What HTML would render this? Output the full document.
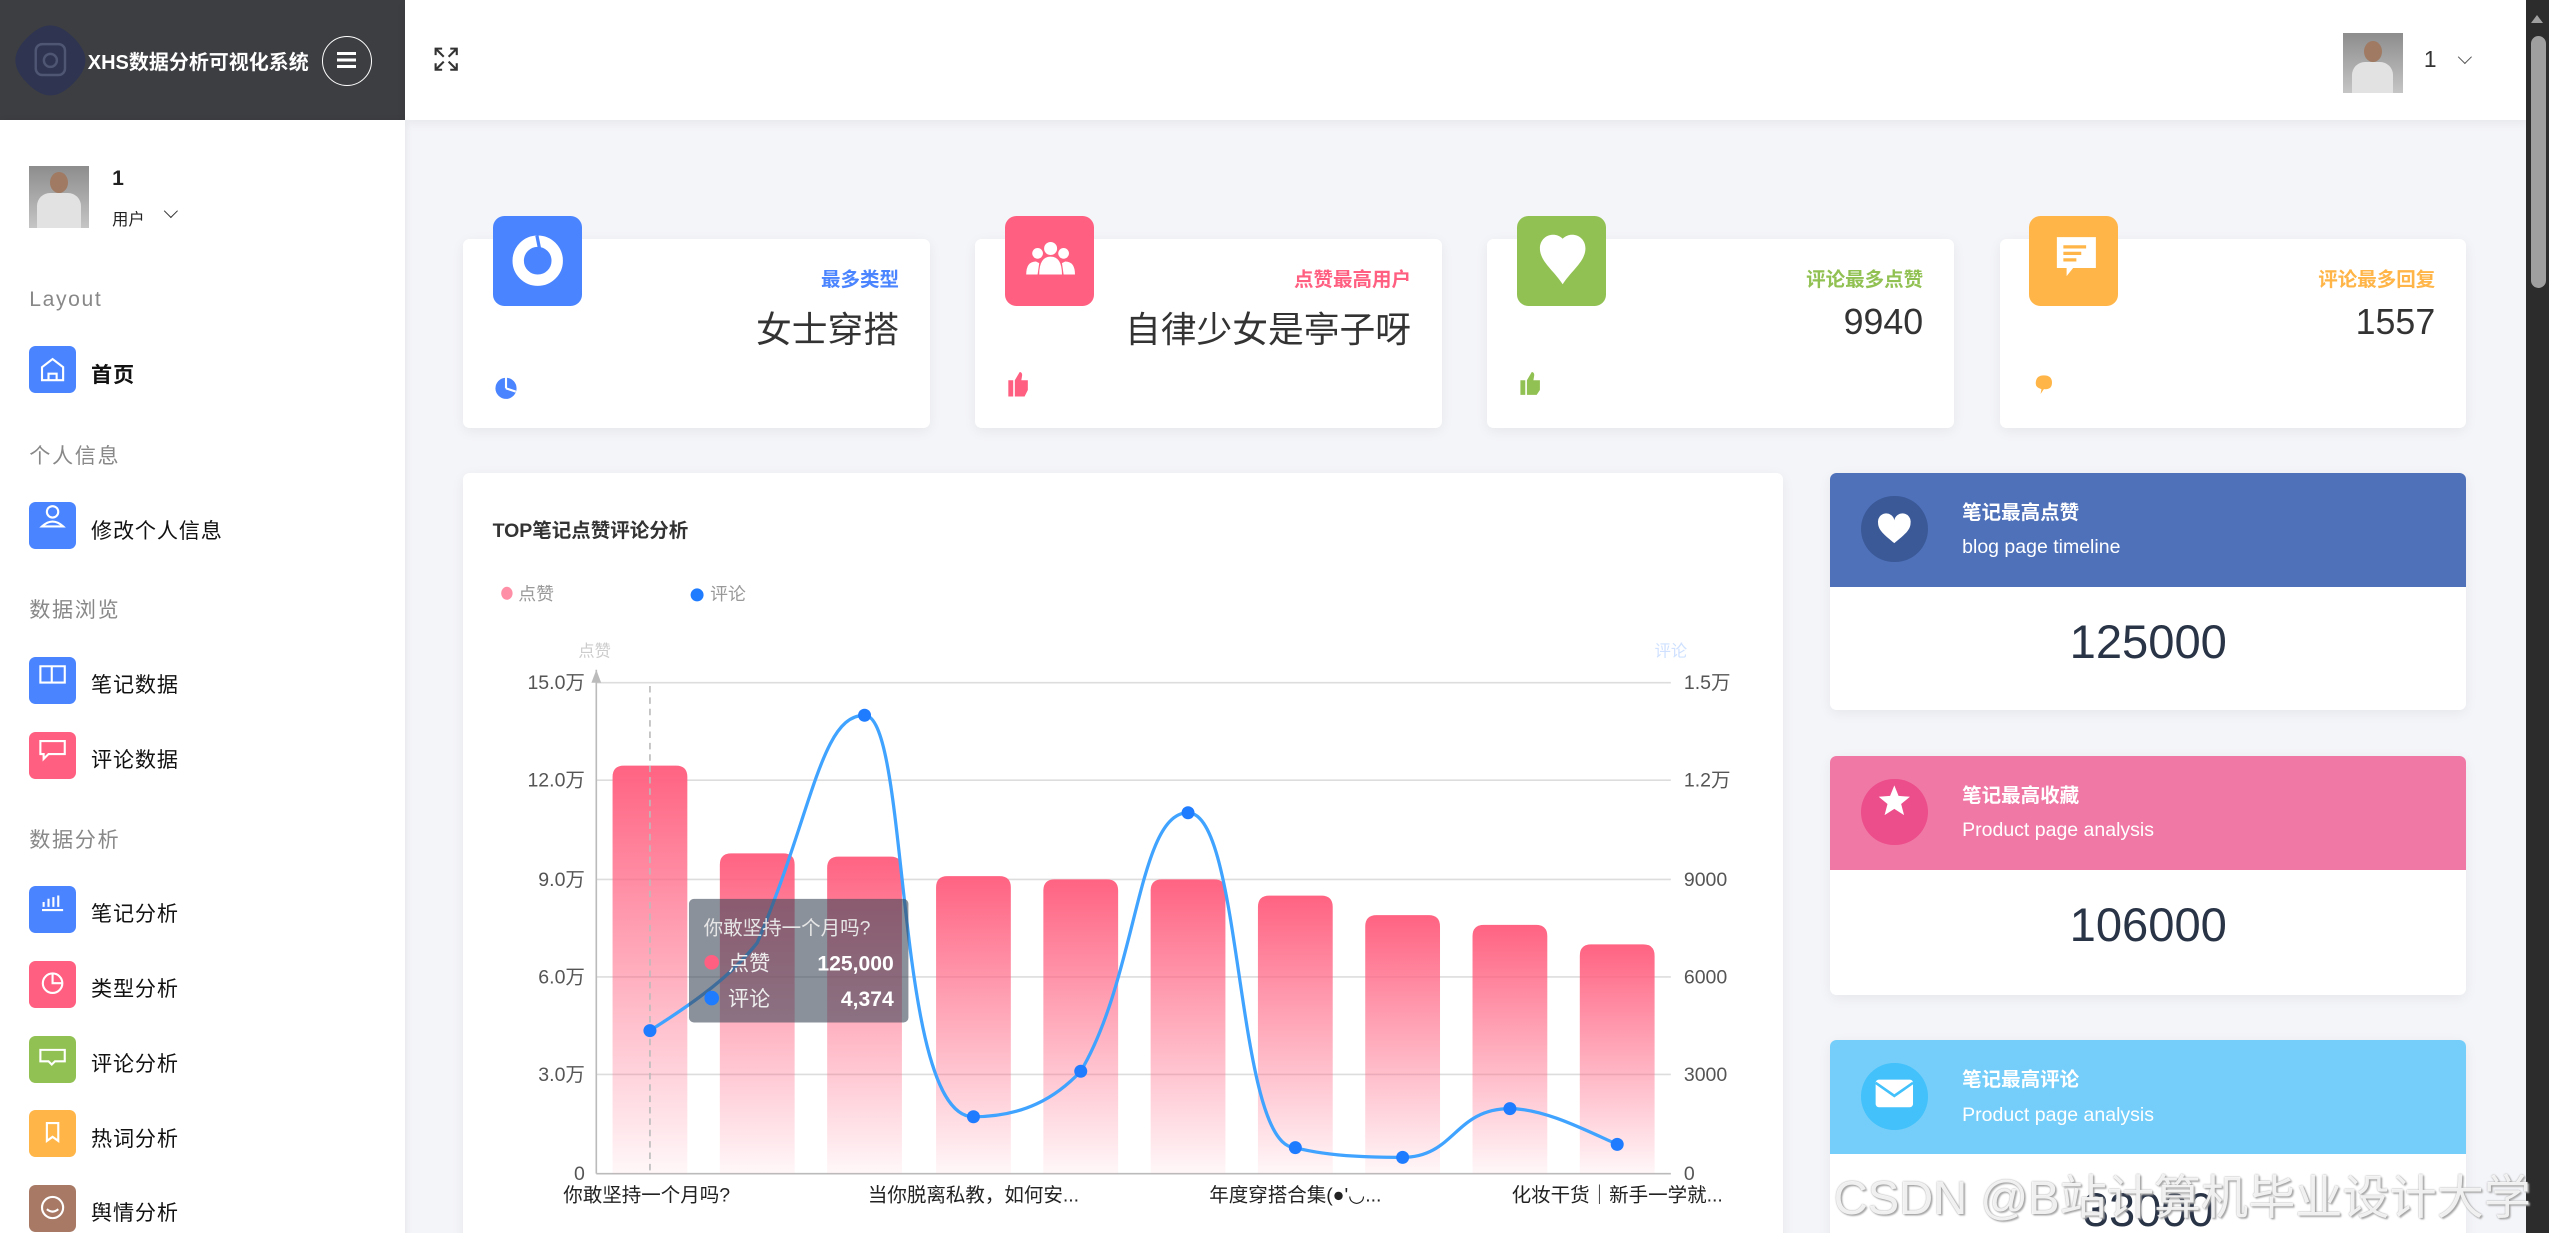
<!DOCTYPE html>
<html><head><meta charset="utf-8"><style>
*{margin:0;padding:0;box-sizing:border-box}
html,body{width:2549px;height:1233px;overflow:hidden;background:#f4f5f9}
#r{zoom:1.62564;width:1568px;height:758.5px;position:relative;overflow:hidden;font-family:"Liberation Sans","Noto Sans CJK SC",sans-serif;background:#f4f5f9;color:#222}
.a{position:absolute}
.side{left:0;top:74px;width:249px;height:700px;background:#fff;box-shadow:1px 0 4px rgba(0,0,0,.06)}
.sec{position:absolute;left:18px;font-size:13px;color:#888;letter-spacing:1px}
.it{position:absolute;left:18px;width:29px;height:29px;border-radius:4px}
.itx{position:absolute;left:56px;font-size:13px;color:#111;letter-spacing:.5px}
.card{background:#fff;border-radius:4px;box-shadow:0 2px 8px rgba(0,0,0,.06);width:287px;height:116px;top:147px}
.ic{width:55px;height:55px;border-radius:7px;top:133px}
.lab{font-size:12px;font-weight:bold;text-align:right;width:200px;top:162px}
.val{font-size:22px;color:#333;text-align:right;width:300px;top:186px}
.rp{left:1126px;width:391px;background:#fff;border-radius:4px;box-shadow:0 2px 8px rgba(0,0,0,.06);overflow:hidden}
.rh{height:70px;position:relative;color:#fff}
.rc{position:absolute;left:19px;top:14px;width:41px;height:41px;border-radius:50%}
.rt{position:absolute;left:81px;top:14px;font-size:12px;font-weight:bold}
.rs{position:absolute;left:81px;top:39px;font-size:12px}
.rv{text-align:center;font-size:29px;color:#2a3447;padding-top:17px}
</style></head><body><div id="r">
<div class="a" style="left:0;top:0;width:249px;height:74px;background:#3d3e42"></div>
<svg class="a" style="left:8px;top:14px" width="46" height="46" viewBox="0 0 46 46"><path d="M23 3 C37 3 43 9 43 23 C43 37 37 43 23 43 C9 43 3 37 3 23 C3 9 9 3 23 3Z" fill="#2f3550" transform="rotate(45 23 23)"/><rect x="14" y="13" width="18" height="19" rx="4" fill="none" stroke="#4e5674" stroke-width="1.5"/><circle cx="23" cy="23" r="4" fill="none" stroke="#4e5674" stroke-width="1.5"/></svg>
<div class="a" style="left:54px;top:28px;color:#fff;font-size:12.3px;font-weight:bold">XHS数据分析可视化系统</div>
<div class="a" style="left:198px;top:22px;width:31px;height:31px;border:1px solid #fff;border-radius:50%"></div>
<div class="a" style="left:207px;top:32px;width:12px;height:2px;background:#fff;box-shadow:0 4px 0 #fff,0 8px 0 #fff"></div>
<div class="a" style="left:249px;top:0;width:1306px;height:74px;background:#fff;box-shadow:0 2px 6px rgba(0,0,0,.06)"></div>
<svg class="a" style="left:267px;top:29px" width="15" height="15" viewBox="0 0 15 15" fill="none" stroke="#333" stroke-width="1.3"><path d="M1 5V1h4M1 1l5 5M14 5V1h-4M14 1L9 6M1 10v4h4M1 14l5-5M14 10v4h-4M14 14L9 9"/></svg>
<div class="a" style="left:1441px;top:20px;width:37px;height:37px;background:linear-gradient(#8d8d8d,#c5c5c5)"><div style="position:absolute;left:13px;top:5px;width:11px;height:13px;border-radius:50%;background:#a07a62"></div><div style="position:absolute;left:6px;top:18px;width:25px;height:19px;border-radius:8px 8px 0 0;background:#e2e2e2"></div></div>
<div class="a" style="left:1491px;top:28px;font-size:14px;color:#333">1</div>
<div class="a" style="left:1513px;top:32px;width:6px;height:6px;border-right:1px solid #555;border-bottom:1px solid #555;transform:rotate(45deg)"></div>
<div class="a" style="left:1554px;top:0;width:14px;height:759px;background:#2c2c2c"></div>
<div class="a" style="left:1557px;top:22px;width:9px;height:155px;border-radius:5px;background:#9f9f9f"></div>
<div class="a" style="left:1557px;top:9px;width:0;height:0;border-left:4px solid transparent;border-right:4px solid transparent;border-bottom:5px solid #9f9f9f"></div>
<div class="a side"></div>
<div class="a" style="left:18px;top:102px;width:37px;height:38px;background:linear-gradient(#8d8d8d,#c5c5c5)"><div style="position:absolute;left:13px;top:4px;width:11px;height:13px;border-radius:50%;background:#a07a62"></div><div style="position:absolute;left:5px;top:17px;width:27px;height:21px;border-radius:8px 8px 0 0;background:#e2e2e2"></div></div>
<div class="a" style="left:69px;top:103px;font-size:13px;font-weight:bold">1</div>
<div class="a" style="left:69px;top:127px;font-size:10px">用户</div>
<div class="a" style="left:102px;top:127px;width:6px;height:6px;border-right:1px solid #333;border-bottom:1px solid #333;transform:rotate(45deg)"></div>
<div class="sec" style="top:177px">Layout</div>
<div class="it" style="top:213px;background:#4a84ff"></div><div class="itx" style="top:220px;font-weight:bold">首页</div>
<div class="sec" style="top:270px">个人信息</div>
<div class="it" style="top:309px;background:#4a84ff"></div><div class="itx" style="top:316px">修改个人信息</div>
<div class="sec" style="top:365px">数据浏览</div>
<div class="it" style="top:404px;background:#4a84ff"></div><div class="itx" style="top:411px">笔记数据</div>
<div class="it" style="top:450px;background:#ff5f80"></div><div class="itx" style="top:457px">评论数据</div>
<div class="sec" style="top:506px">数据分析</div>
<div class="it" style="top:545px;background:#4a84ff"></div><div class="itx" style="top:552px">笔记分析</div>
<div class="it" style="top:591px;background:#ff5f80"></div><div class="itx" style="top:598px">类型分析</div>
<div class="it" style="top:637px;background:#92c153"></div><div class="itx" style="top:644px">评论分析</div>
<div class="it" style="top:683px;background:#ffb547"></div><div class="itx" style="top:690px">热词分析</div>
<div class="it" style="top:729px;background:#a87a66"></div><div class="itx" style="top:736px">舆情分析</div>
<svg class="a" style="left:18px;top:213px" width="29" height="560" viewBox="0 0 29 560" fill="none" stroke="#fff" stroke-width="1.3">
<path d="M8 13l6.5-5 6.5 5v8H8z M12 21v-4h5v4"/>
<path d="M11 102a3.5 3.5 0 1 0 7 0a3.5 3.5 0 1 0-7 0M8 111q6.5-6 13 0z"/>
<path d="M7 197h7v10H7zM14 197h8v10h-8z"/>
<path d="M7 243h15v8h-10l-3 3v-3H7z"/>
<path d="M8 347h13M9 345v-3M12 345v-5M15 345v-6M18 345v-7"/>
<circle cx="14.5" cy="392" r="6"/><path d="M14.5 386v6h6"/>
<path d="M7 433h15v7h-6l-2 2-2-2H7z"/>
<path d="M11 478h7v11l-3.5-2.5-3.5 2.5z"/>
<circle cx="14.5" cy="530" r="6.5"/><path d="M11 531q3.5 3 7 0"/>
</svg>
<div class="a card" style="left:285px"></div><div class="a card" style="left:600px"></div><div class="a card" style="left:915px"></div><div class="a card" style="left:1230px"></div>
<div class="a ic" style="left:303px;background:#4a84ff"></div><div class="a ic" style="left:618px;background:#ff5f80"></div><div class="a ic" style="left:933px;background:#92c153"></div><div class="a ic" style="left:1248px;background:#ffb547"></div>
<svg class="a" style="left:303px;top:133px" width="1300" height="115">
<circle cx="27.5" cy="27.5" r="12" fill="none" stroke="#fff" stroke-width="7"/><path d="M27 12l2 10" stroke="#4a84ff" stroke-width="2"/>
<g fill="#fff"><circle cx="343" cy="20" r="4"/><circle cx="335" cy="23" r="3.3"/><circle cx="351" cy="23" r="3.3"/><path d="M336 36q0-11 7-11t7 11zM328 36q0-8 6-8l2 1-1 7zM358 36q0-8-6-8l-2 1 1 7z"/></g>
<path d="M658 14c-5-5-14-2-14 6c0 8 9 14 14 22c5-8 14-14 14-22c0-8-9-11-14-6z" fill="#fff"/>
<g><path d="M962 13h24v19h-14l-4 5v-5h-6z" fill="#fff"/><path d="M966 19h14M966 23h11M966 27h8" stroke="#ffb547" stroke-width="2"/></g>
<circle cx="8" cy="106" r="6.5" fill="#4a84ff"/><path d="M8 106V99M8 106l6 2" stroke="#fff" stroke-width="1.3"/>
<path d="M317 101h3v10h-3zM321 101l3-5q1.5 0 1.5 2l-.5 3h4v6l-2 4h-6z" fill="#ff5f80"/>
<path d="M632 101h3v9h-3zM636 101l3-5q1.5 0 1.5 2l-.5 3h4v6l-2 3h-6z" fill="#92c153"/>
<path d="M949 103q0-5 5-5t5 4.5-5 4l-2 3 .5-3q-3.5-1-3.5-3.5z" fill="#ffb547"/>
</svg>
<div class="a lab" style="left:353px;color:#4a84ff">最多类型</div>
<div class="a lab" style="left:668px;color:#ff5f80">点赞最高用户</div>
<div class="a lab" style="left:983px;color:#92c153">评论最多点赞</div>
<div class="a lab" style="left:1298px;color:#ffb547">评论最多回复</div>
<div class="a val" style="left:253px">女士穿搭</div>
<div class="a val" style="left:568px">自律少女是亭子呀</div>
<div class="a val" style="left:883px">9940</div>
<div class="a val" style="left:1198px">1557</div>
<div class="a" style="left:285px;top:291px;width:812px;height:480px;background:#fff;border-radius:4px;box-shadow:0 2px 8px rgba(0,0,0,.06)"></div>
<div class="a" style="left:303px;top:316px;font-size:12px;font-weight:bold;color:#333">TOP笔记点赞评论分析</div>
<svg class="a" style="left:285px;top:291px" width="812" height="470" font-family="Liberation Sans,Noto Sans CJK SC,sans-serif">
<defs><linearGradient id="g" x1="0" y1="0" x2="0" y2="1"><stop offset="0" stop-color="#ff6382"/><stop offset="1" stop-color="#ff6382" stop-opacity=".05"/></linearGradient></defs>
<g transform="translate(-285,-291)">
<ellipse cx="312" cy="365" rx="3.5" ry="4" fill="#ff8fa6"/><text x="319" y="369" font-size="11" fill="#999">点赞</text>
<circle cx="429" cy="366" r="4" fill="#1f7cff"/><text x="437" y="369" font-size="11" fill="#999">评论</text>
<text x="356" y="404" font-size="10" fill="#ccc">点赞</text><text x="1018" y="404" font-size="10" fill="#cfe1ff">评论</text>
<g stroke="#ddd" stroke-width="1"><path d="M367 420H1028M367 480H1028M367 541H1028M367 601H1028M367 661H1028"/></g>
<path d="M367 722H1028M367 722V412" stroke="#bbb"/><path d="M364 420l3-8 3 8z" fill="#bbb"/>
<g font-size="12" fill="#555" text-anchor="end"><text x="360" y="424">15.0万</text><text x="360" y="484">12.0万</text><text x="360" y="545">9.0万</text><text x="360" y="605">6.0万</text><text x="360" y="665">3.0万</text><text x="360" y="726">0</text></g>
<g font-size="12" fill="#555"><text x="1036" y="424">1.5万</text><text x="1036" y="484">1.2万</text><text x="1036" y="545">9000</text><text x="1036" y="605">6000</text><text x="1036" y="665">3000</text><text x="1036" y="726">0</text></g>
<g fill="url(#g)">
<path d="M377 722V478q0-7 7-7h32q7 0 7 7V722z"/>
<path d="M443 722V532q0-7 7-7h32q7 0 7 7V722z"/>
<path d="M509 722V534q0-7 7-7h32q7 0 7 7V722z"/>
<path d="M576 722V546q0-7 7-7h32q7 0 7 7V722z"/>
<path d="M642 722V548q0-7 7-7h32q7 0 7 7V722z"/>
<path d="M708 722V548q0-7 7-7h32q7 0 7 7V722z"/>
<path d="M774 722V558q0-7 7-7h32q7 0 7 7V722z"/>
<path d="M840 722V570q0-7 7-7h32q7 0 7 7V722z"/>
<path d="M906 722V576q0-7 7-7h32q7 0 7 7V722z"/>
<path d="M972 722V588q0-7 7-7h32q7 0 7 7V722z"/>
</g>
<path d="M400 422V722" stroke="#bbb" stroke-dasharray="4,3"/>
<path d="M400 634C430 615 450 600 466 580C500 500 505 440 532 440C560 440 550 687 599 687C630 687 650 675 665 659C700 600 700 500 731 500C765 500 760 706 797 706C820 712 850 712 863 712C895 712 895 682 929 682C950 682 975 695 995 704" fill="none" stroke="#3fa3ff" stroke-width="2"/>
<g fill="#1f7cff"><circle cx="400" cy="634" r="4"/><circle cx="532" cy="440" r="4"/><circle cx="599" cy="687" r="4"/><circle cx="665" cy="659" r="4"/><circle cx="731" cy="500" r="4"/><circle cx="797" cy="706" r="4"/><circle cx="863" cy="712" r="4"/><circle cx="929" cy="682" r="4"/><circle cx="995" cy="704" r="4"/></g>
<rect x="424" y="553" width="135" height="76" rx="3" fill="#3d4759" fill-opacity=".6"/>
<text x="433" y="575" font-size="12" fill="#e6e6e6">你敢坚持一个月吗?</text>
<circle cx="438" cy="592" r="4.5" fill="#ff5f80"/><text x="448" y="597" font-size="13" fill="#eee">点赞</text><text x="550" y="597" font-size="13" fill="#fff" font-weight="bold" text-anchor="end">125,000</text>
<circle cx="438" cy="614" r="4.5" fill="#1f7cff"/><text x="448" y="619" font-size="13" fill="#eee">评论</text><text x="550" y="619" font-size="13" fill="#fff" font-weight="bold" text-anchor="end">4,374</text>
<g font-size="12" fill="#222" text-anchor="middle"><text x="398" y="739">你敢坚持一个月吗?</text><text x="599" y="739">当你脱离私教，如何安...</text><text x="797" y="739">年度穿搭合集(●'◡...</text><text x="995" y="739">化妆干货｜新手一学就...</text></g>
</g></svg>
<div class="a rp" style="top:291px;height:146px"><div class="rh" style="background:#4e71ba"><div class="rc" style="background:#3b5997"></div><div class="rt">笔记最高点赞</div><div class="rs">blog page timeline</div></div><div class="rv">125000</div></div>
<div class="a rp" style="top:465px;height:147px"><div class="rh" style="background:#f078a5"><div class="rc" style="background:#ec4d8b"></div><div class="rt">笔记最高收藏</div><div class="rs">Product page analysis</div></div><div class="rv">106000</div></div>
<div class="a rp" style="top:640px;height:140px"><div class="rh" style="background:#75cefa"><div class="rc" style="background:#42c1fb"></div><div class="rt">笔记最高评论</div><div class="rs">Product page analysis</div></div><div class="rv">33000</div></div>
<svg class="a" style="left:1145px;top:305px" width="41" height="400" fill="#fff">
<path d="M20.5 29c-6-5-10-8-10-12.5a5 5 0 0 1 10-1.5a5 5 0 0 1 10 1.5c0 4.5-4 7.5-10 12.5z"/>
<path d="M20.5 178l2.6 6.5 7 .5-5.4 4.5 1.8 6.8-6-3.8-6 3.8 1.8-6.8-5.4-4.5 7-.5z"/>
<rect x="9" y="359" width="23" height="17" rx="2"/><path d="M9 361l11.5 8 11.5-8" fill="none" stroke="#42c1fb" stroke-width="1.6"/>
</svg>
<div class="a" style="left:1128px;top:713px;font-size:29px;color:rgba(255,255,255,.85);text-shadow:0 0 1px #999,1px 1px 1px #aaa;white-space:nowrap">CSDN @B站计算机毕业设计大学</div>
</div></body></html>
